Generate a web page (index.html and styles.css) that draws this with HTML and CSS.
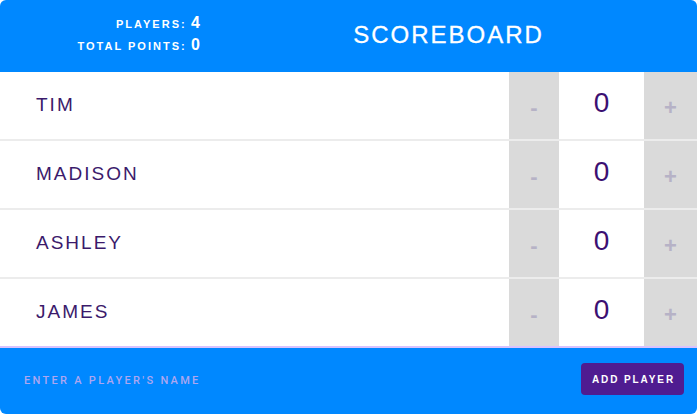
FILE: index.html
```html
<!DOCTYPE html>
<html>
<head>
<meta charset="utf-8">
<link rel="stylesheet" href="styles.css">
</head>
<body>
<div class="scoreboard">
  <header class="header">
    <div class="stats">
      <div class="stat"><span class="stat-label">PLAYERS:</span> <span class="stat-value">4</span></div>
      <div class="stat"><span class="stat-label">TOTAL POINTS:</span> <span class="stat-value">0</span></div>
    </div>
    <h1 class="title">SCOREBOARD</h1>
  </header>
  <div class="players">
    <div class="player">
      <span class="name">TIM</span>
      <div class="counter"><button class="btn minus">-</button><span class="score">0</span><button class="btn plus">+</button></div>
    </div>
    <div class="player">
      <span class="name">MADISON</span>
      <div class="counter"><button class="btn minus">-</button><span class="score">0</span><button class="btn plus">+</button></div>
    </div>
    <div class="player">
      <span class="name">ASHLEY</span>
      <div class="counter"><button class="btn minus">-</button><span class="score">0</span><button class="btn plus">+</button></div>
    </div>
    <div class="player last">
      <span class="name">JAMES</span>
      <div class="counter"><button class="btn minus">-</button><span class="score">0</span><button class="btn plus">+</button></div>
    </div>
  </div>
  <form class="add-form">
    <input class="add-input" type="text" placeholder="ENTER A PLAYER'S NAME">
    <button class="add-btn" type="button">ADD PLAYER</button>
  </form>
</div>
</body>
</html>
```
FILE: styles.css
```css
html, body {
  margin: 0;
  padding: 0;
  background: #ffffff;
}
.scoreboard {
  width: 697px;
  height: 414px;
  border-radius: 6px;
  overflow: hidden;
  display: flex;
  flex-direction: column;
  font-family: "Liberation Sans", Arial, sans-serif;
  background: #ffffff;
}
.header {
  height: 72px;
  background: #0088ff;
  display: flex;
  align-items: center;
  color: #ffffff;
  flex-shrink: 0;
}
.stats {
  width: 200px;
  text-align: right;
  display: flex;
  flex-direction: column;
  gap: 3px;
  padding-bottom: 3px;
}
.stat {
  line-height: 18px;
}
.stat-label {
  font-size: 11px;
  font-weight: bold;
  letter-spacing: 2px;
}
.stat-value {
  font-size: 16px;
  font-weight: bold;
}
.title {
  flex: 1;
  margin: 0;
  text-align: center;
  font-size: 24px;
  font-weight: normal;
  letter-spacing: 2px;
  padding-bottom: 2px;
  -webkit-text-stroke: 0.3px #ffffff;
}
.players {
  display: flex;
  flex-direction: column;
}
.player {
  height: 67px;
  border-bottom: 2px solid #ececec;
  display: flex;
  align-items: stretch;
}
.player.last {
  border-bottom: 2px solid #d8c2ff;
}
.name {
  flex: 1;
  padding-left: 36px;
  display: flex;
  align-items: center;
  font-size: 19px;
  letter-spacing: 2px;
  color: #3b1a6b;
  padding-bottom: 1px;
}
.counter {
  display: flex;
  align-items: stretch;
}
.btn {
  border: none;
  margin: 0;
  padding: 0;
  background: #dadada;
  color: #b6b2c6;
  font-family: "Liberation Sans", Arial, sans-serif;
  font-weight: bold;
  font-size: 22px;
  display: flex;
  align-items: center;
  justify-content: center;
  padding-top: 4px;
}
.minus {
  width: 50px;
}
.plus {
  width: 53px;
}
.score {
  width: 85px;
  display: flex;
  align-items: center;
  justify-content: center;
  font-size: 28px;
  color: #3c1072;
  padding-bottom: 6px;
}
.add-form {
  flex: 1;
  margin: 0;
  background: #0088ff;
  display: flex;
  align-items: center;
  padding: 0 13px 4px 24px;
}
.add-input {
  flex: 1;
  border: none;
  outline: none;
  background: transparent;
  padding: 0;
  font-family: Roboto, "Liberation Sans", sans-serif;
  font-weight: 500;
  font-size: 11px;
  letter-spacing: 2.3px;
  color: #ffffff;
  margin-top: 2px;
}
.add-input::placeholder {
  color: #ada6f0;
  opacity: 1;
}
.add-btn {
  width: 103px;
  height: 32px;
  border: none;
  border-radius: 4px;
  background: #4f1c91;
  color: #ffffff;
  font-family: "Liberation Sans", Arial, sans-serif;
  font-weight: bold;
  font-size: 10px;
  letter-spacing: 1.9px;
  padding: 0 0 0 2px;
  margin-top: 0;
}
```
